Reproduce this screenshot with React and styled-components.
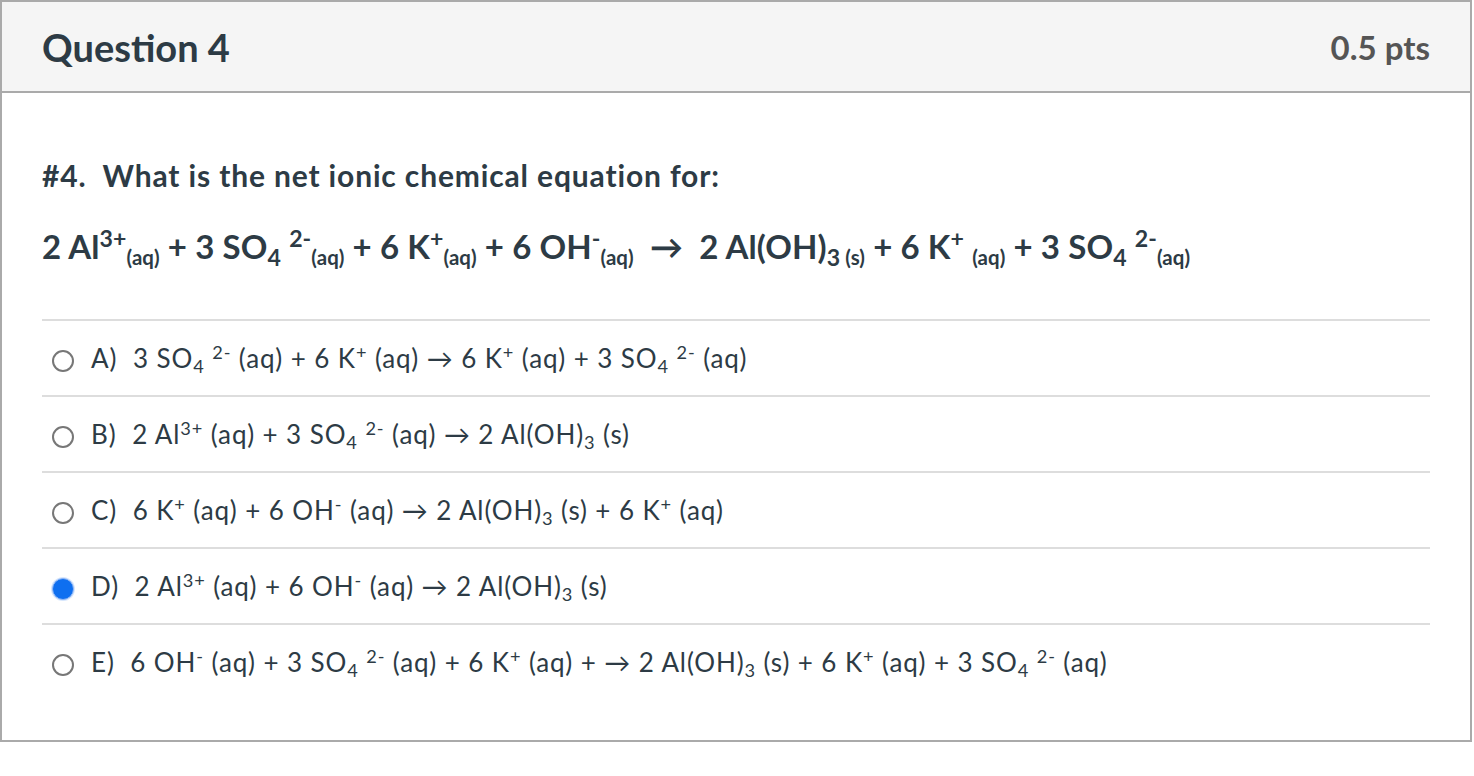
import React from "react";
import styled, { createGlobalStyle } from "styled-components";

const GlobalStyle = createGlobalStyle`
  body {
    margin: 0;
    background: #ffffff;
    font-family: Lato, "Noto Sans", "Liberation Sans", sans-serif;
    color: #2d3b45;
  }
`;

const Card = styled.div`
  width: 1468px;
  height: 738px;
  border: 2px solid #aaaaaa;
  background: #ffffff;
  display: flex;
  flex-direction: column;
`;

const Header = styled.div`
  height: 89px;
  background: #f5f5f5;
  border-bottom: 2px solid #aaaaaa;
  display: flex;
  align-items: center;
  justify-content: space-between;
  padding: 0 40px;
`;

const Title = styled.h2`
  margin: 0;
  font-size: 38px;
  font-weight: 700;
  color: #2d3b45;
`;

const Points = styled.div`
  font-size: 33px;
  font-weight: 700;
  color: #555555;
`;

const Body = styled.div`
  padding: 0 40px;
`;

const Prompt = styled.p`
  margin: 0;
  padding-top: 58px;
  font-size: 30px;
  letter-spacing: 0.85px;
  font-weight: 700;
  line-height: 48px;
`;

const Equation = styled.p`
  margin: 0;
  padding-top: 22px;
  font-size: 33px;
  letter-spacing: 0.1px;
  font-weight: 700;
  line-height: 50px;
  white-space: nowrap;
`;

const Sup = styled.sup`
  font-size: ${p => p.$size || "0.7em"};
  line-height: 0;
  vertical-align: ${p => p.$raise || "0.5em"};
`;

const Sub = styled.sub`
  font-size: ${p => p.$size || "0.7em"};
  line-height: 0;
  vertical-align: ${p => p.$drop || "-0.3em"};
`;

const Answers = styled.ul`
  list-style: none;
  margin: 48px 0 0;
  padding: 0;
`;

const Answer = styled.li`
  border-top: 2px solid #dddddd;
  height: 74px;
  display: flex;
  align-items: center;
  gap: 10px;
  padding-left: 10px;
  font-size: 26px;
  letter-spacing: 0.9px;
  white-space: nowrap;
`;

const Radio = styled.span`
  box-sizing: border-box;
  width: 22px;
  height: 22px;
  border-radius: 50%;
  flex-shrink: 0;
  border: ${p => (p.$checked ? "1px solid #8fb6f5" : "2px solid #777777")};
  background: ${p => (p.$checked ? "#0e6ff0" : "#ffffff")};
  box-shadow: ${p => (p.$checked ? "0 0 0 1px #d6e6fd" : "none")};
  margin-right: 7px;
  margin-top: 6px;
`;

const Letter = styled.span`
  margin-right: 8px;
`;

const Arrow = () => <span>&rarr;</span>;

const answers = [
  {
    id: "A",
    body: (
      <>
        3 SO<Sub>4</Sub> <Sup>2-</Sup> (aq) + 6 K<Sup>+</Sup> (aq) <Arrow /> 6 K<Sup>+</Sup> (aq) + 3 SO
        <Sub>4</Sub> <Sup>2-</Sup> (aq)
      </>
    )
  },
  {
    id: "B",
    body: (
      <>
        2 Al<Sup>3+</Sup> (aq) + 3 SO<Sub>4</Sub> <Sup>2-</Sup> (aq) <Arrow /> 2 Al(OH)<Sub>3</Sub> (s)
      </>
    )
  },
  {
    id: "C",
    body: (
      <>
        6 K<Sup>+</Sup> (aq) + 6 OH<Sup>-</Sup> (aq) <Arrow /> 2 Al(OH)<Sub>3</Sub> (s) + 6 K<Sup>+</Sup> (aq)
      </>
    )
  },
  {
    id: "D",
    checked: true,
    body: (
      <>
        2 Al<Sup>3+</Sup> (aq) + 6 OH<Sup>-</Sup> (aq) <Arrow /> 2 Al(OH)<Sub>3</Sub> (s)
      </>
    )
  },
  {
    id: "E",
    body: (
      <>
        6 OH<Sup>-</Sup> (aq) + 3 SO<Sub>4</Sub> <Sup>2-</Sup> (aq) + 6 K<Sup>+</Sup> (aq) + <Arrow /> 2 Al(OH)
        <Sub>3</Sub> (s) + 6 K<Sup>+</Sup> (aq) + 3 SO<Sub>4</Sub> <Sup>2-</Sup> (aq)
      </>
    )
  }
];

const App = () => {
  return (
    <>
      <GlobalStyle />
      <Card>
        <Header>
          <Title>Question 4</Title>
          <Points>0.5 pts</Points>
        </Header>
        <Body>
          <Prompt>#4.&nbsp; What is the net ionic chemical equation for:</Prompt>
          <Equation>
            2 Al<Sup>3+</Sup>
            <Sub $size="0.62em">(aq)</Sub> + 3 SO<Sub>4</Sub> <Sup>2-</Sup>
            <Sub $size="0.62em">(aq)</Sub> + 6 K<Sup>+</Sup>
            <Sub $size="0.62em">(aq)</Sub> + 6 OH<Sup>-</Sup>
            <Sub $size="0.62em">(aq)</Sub> &nbsp;&rarr;&nbsp; 2 Al(OH)<Sub>3</Sub>
            <Sub $size="0.62em"> (s)</Sub> + 6 K<Sup>+</Sup> <Sub $size="0.62em">(aq)</Sub> + 3 SO<Sub>4</Sub>{" "}
            <Sup>2-</Sup>
            <Sub $size="0.62em">(aq)</Sub>
          </Equation>
          <Answers>
            {answers.map(a => (
              <Answer key={a.id}>
                <Radio $checked={a.checked} />
                <span>
                  <Letter>{a.id})</Letter> {a.body}
                </span>
              </Answer>
            ))}
          </Answers>
        </Body>
      </Card>
    </>
  );
};

export default App;
